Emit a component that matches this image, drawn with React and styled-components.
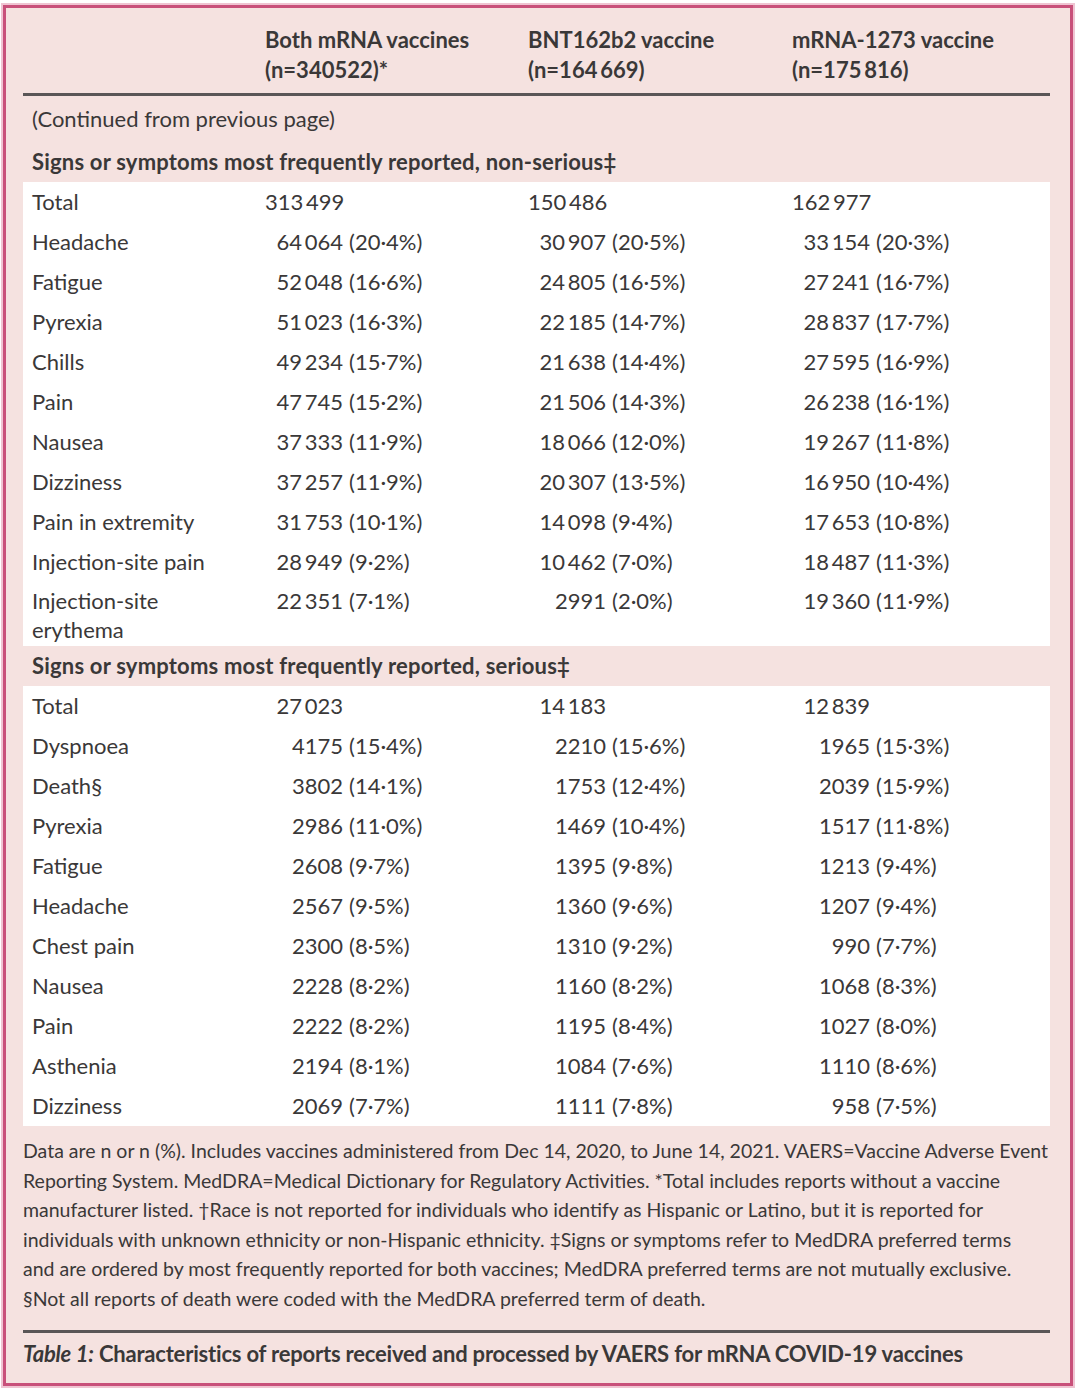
import React from 'react';
import styled, { createGlobalStyle } from 'styled-components';

const GlobalStyle = createGlobalStyle`
  body {
    margin: 0;
    background: #fff;
  }
`;

const Frame = styled.div`
  box-sizing: border-box;
  margin: 5px 7px 7px 3px;
  width: 1070px;
  border: 3px solid #c8507a;
  box-shadow: 0 0 0 2px #efc4d2;
  background-color: #f5e2e0;
  padding: 17px 20px 14px 17px;
  font-family: Lato, 'Open Sans', sans-serif;
  color: #3a3838;
`;

const Grid = styled.div`
  display: grid;
  grid-template-columns: 242px 263px 264px 1fr;
`;

const Header = styled(Grid)`
  font-weight: 700;
  font-size: 22px;
  line-height: 30px;
  padding-bottom: 8px;
  border-bottom: 3px solid #5a5657;
`;

const Continued = styled.div`
  font-size: 22px;
  line-height: 30px;
  padding: 8px 0 8px 9px;
`;

const SectionHead = styled.div`
  font-weight: 700;
  font-size: 22px;
  line-height: 30px;
  padding: 5px 0 5px 9px;
  letter-spacing: 0.2px;
`;

const Panel = styled.div`
  background-color: #fff;
`;

const Row = styled(Grid)`
  font-size: 22px;
  line-height: 29px;
  padding: ${(p) => (p.$wrap ? '4px 0 2px' : '5px 0 6px')};
`;

const Label = styled.div`
  padding-left: 9px;
  padding-right: 60px;
`;

const Value = styled.div`
  display: flex;
  white-space: nowrap;
`;

const Num = styled.span`
  width: 78px;
  text-align: right;
`;

const Pct = styled.span`
  margin-left: 6px;
`;

const Notes = styled.p`
  margin: 0;
  padding: 10px 0 17px;
  font-size: 19.5px;
  line-height: 29.5px;
  white-space: nowrap;
  border-bottom: 3px solid #5a5657;
`;

const Caption = styled.div`
  font-size: 22px;
  line-height: 30px;
  font-weight: 700;
  padding-top: 6px;
  letter-spacing: -0.2px;

  em {
    font-style: italic;
  }
`;

const t = '\u2009';

const nonSerious = [
  ['Total', [`313${t}499`], [`150${t}486`], [`162${t}977`]],
  ['Headache', [`64${t}064`, '20·4%'], [`30${t}907`, '20·5%'], [`33${t}154`, '20·3%']],
  ['Fatigue', [`52${t}048`, '16·6%'], [`24${t}805`, '16·5%'], [`27${t}241`, '16·7%']],
  ['Pyrexia', [`51${t}023`, '16·3%'], [`22${t}185`, '14·7%'], [`28${t}837`, '17·7%']],
  ['Chills', [`49${t}234`, '15·7%'], [`21${t}638`, '14·4%'], [`27${t}595`, '16·9%']],
  ['Pain', [`47${t}745`, '15·2%'], [`21${t}506`, '14·3%'], [`26${t}238`, '16·1%']],
  ['Nausea', [`37${t}333`, '11·9%'], [`18${t}066`, '12·0%'], [`19${t}267`, '11·8%']],
  ['Dizziness', [`37${t}257`, '11·9%'], [`20${t}307`, '13·5%'], [`16${t}950`, '10·4%']],
  ['Pain in extremity', [`31${t}753`, '10·1%'], [`14${t}098`, '9·4%'], [`17${t}653`, '10·8%']],
  ['Injection-site pain', [`28${t}949`, '9·2%'], [`10${t}462`, '7·0%'], [`18${t}487`, '11·3%']],
  ['Injection-site erythema', [`22${t}351`, '7·1%'], ['2991', '2·0%'], [`19${t}360`, '11·9%']],
];

const serious = [
  ['Total', [`27${t}023`], [`14${t}183`], [`12${t}839`]],
  ['Dyspnoea', ['4175', '15·4%'], ['2210', '15·6%'], ['1965', '15·3%']],
  ['Death§', ['3802', '14·1%'], ['1753', '12·4%'], ['2039', '15·9%']],
  ['Pyrexia', ['2986', '11·0%'], ['1469', '10·4%'], ['1517', '11·8%']],
  ['Fatigue', ['2608', '9·7%'], ['1395', '9·8%'], ['1213', '9·4%']],
  ['Headache', ['2567', '9·5%'], ['1360', '9·6%'], ['1207', '9·4%']],
  ['Chest pain', ['2300', '8·5%'], ['1310', '9·2%'], ['990', '7·7%']],
  ['Nausea', ['2228', '8·2%'], ['1160', '8·2%'], ['1068', '8·3%']],
  ['Pain', ['2222', '8·2%'], ['1195', '8·4%'], ['1027', '8·0%']],
  ['Asthenia', ['2194', '8·1%'], ['1084', '7·6%'], ['1110', '8·6%']],
  ['Dizziness', ['2069', '7·7%'], ['1111', '7·8%'], ['958', '7·5%']],
];

function Cell({ value }) {
  const [n, pct] = value;
  return (
    <Value>
      <Num>{n}</Num>
      {pct && <Pct>({pct})</Pct>}
    </Value>
  );
}

function Section({ rows }) {
  return (
    <Panel>
      {rows.map(([label, ...vals], i) => (
        <Row key={label + i} $wrap={label.length > 20}>
          <Label>{label}</Label>
          {vals.map((v, j) => (
            <Cell key={j} value={v} />
          ))}
        </Row>
      ))}
    </Panel>
  );
}

export default function App() {
  return (
    <>
      <GlobalStyle />
      <Frame>
        <Header>
          <div />
          <div>
            Both mRNA vaccines
            <br />
            (n=340522)*
          </div>
          <div>
            BNT162b2 vaccine
            <br />
            (n=164{t}669)
          </div>
          <div>
            mRNA-1273 vaccine
            <br />
            (n=175{t}816)
          </div>
        </Header>
        <Continued>(Continued from previous page)</Continued>
        <SectionHead>Signs or symptoms most frequently reported, non-serious‡</SectionHead>
        <Section rows={nonSerious} />
        <SectionHead>Signs or symptoms most frequently reported, serious‡</SectionHead>
        <Section rows={serious} />
        <Notes>
          Data are n or n (%). Includes vaccines administered from Dec 14, 2020, to June 14, 2021. VAERS=Vaccine Adverse Event
          <br />
          Reporting System. MedDRA=Medical Dictionary for Regulatory Activities. *Total includes reports without a vaccine
          <br />
          manufacturer listed. †Race is not reported for individuals who identify as Hispanic or Latino, but it is reported for
          <br />
          individuals with unknown ethnicity or non-Hispanic ethnicity. ‡Signs or symptoms refer to MedDRA preferred terms
          <br />
          and are ordered by most frequently reported for both vaccines; MedDRA preferred terms are not mutually exclusive.
          <br />
          §Not all reports of death were coded with the MedDRA preferred term of death.
        </Notes>
        <Caption>
          <em>Table 1:</em> Characteristics of reports received and processed by VAERS for mRNA COVID-19 vaccines
        </Caption>
      </Frame>
    </>
  );
}
